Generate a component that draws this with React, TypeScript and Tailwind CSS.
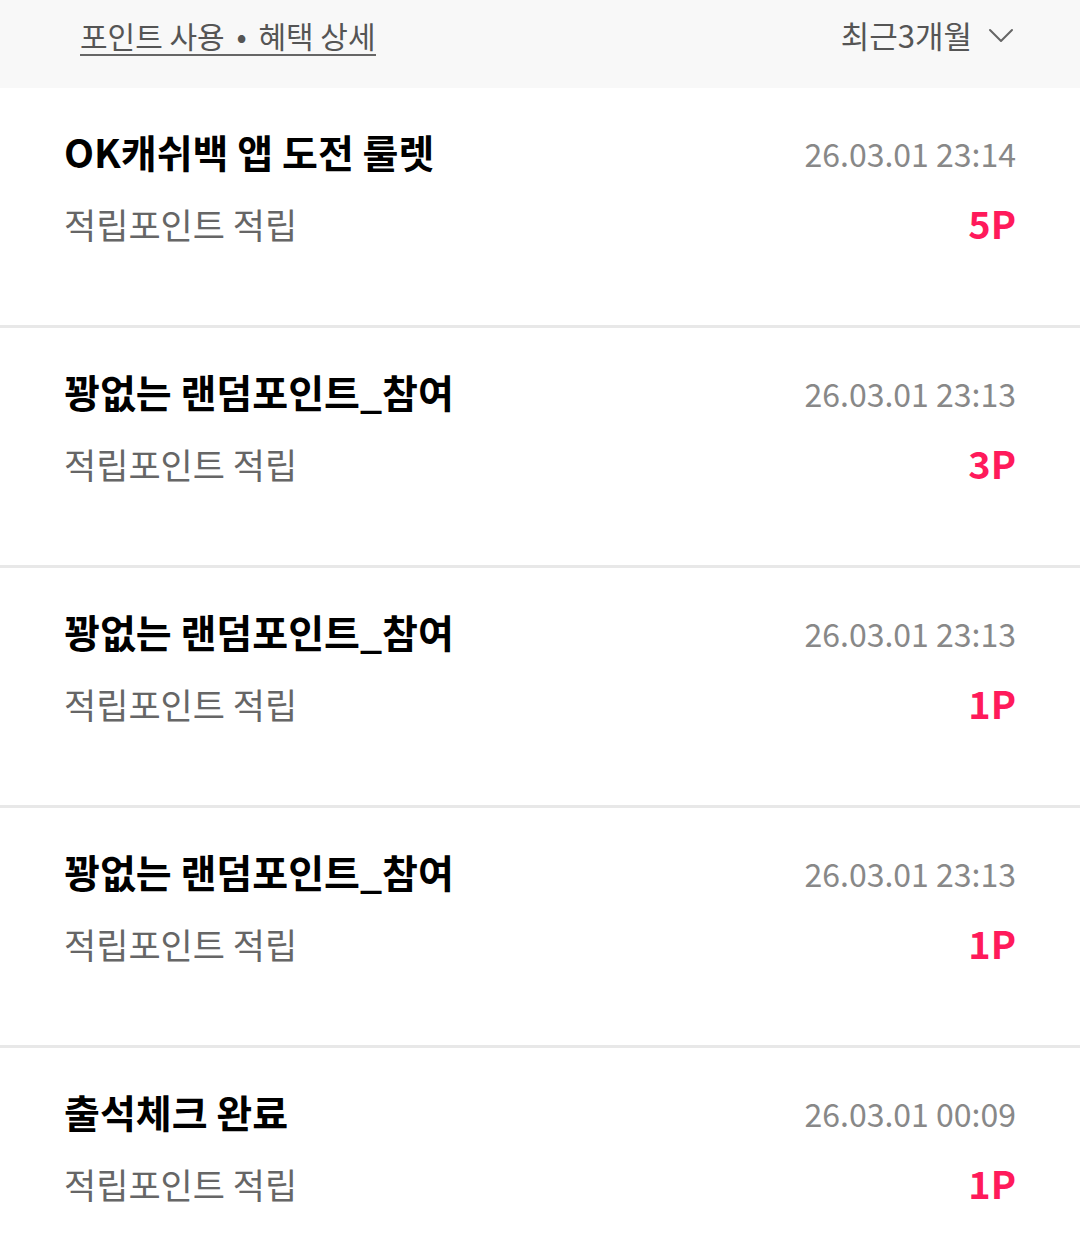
import React from 'react';

interface PointItem {
    title: string;
    desc: string;
    date: string;
    point: string;
}

const items: PointItem[] = [
    { title: 'OK캐쉬백 앱 도전 룰렛', desc: '적립포인트 적립', date: '26.03.01 23:14', point: '5P' },
    { title: '꽝없는 랜덤포인트_참여', desc: '적립포인트 적립', date: '26.03.01 23:13', point: '3P' },
    { title: '꽝없는 랜덤포인트_참여', desc: '적립포인트 적립', date: '26.03.01 23:13', point: '1P' },
    { title: '꽝없는 랜덤포인트_참여', desc: '적립포인트 적립', date: '26.03.01 23:13', point: '1P' },
    { title: '출석체크 완료', desc: '적립포인트 적립', date: '26.03.01 00:09', point: '1P' },
];

const font = { fontFamily: '"Noto Sans CJK KR", "Noto Sans", sans-serif' };

export default function App() {
    return (
        <div className="w-[1080px] h-[1253px] bg-white overflow-hidden" style={font}>
            <div className="h-[88px] bg-[#f8f8f8] flex justify-between items-start pl-[80px] pr-[66px] pt-[16px]">
                <span className="inline-block text-[30px] leading-[38px] text-[#555] border-b-2 border-[#666] whitespace-nowrap">
                    포인트 사용 <span className="mx-[5px]">•</span> 혜택 상세
                </span>
                <div className="flex items-start gap-[16px] text-[#555]">
                    <span className="text-[31px] leading-[40px] -mt-[1px]">최근3개월</span>
                    <svg width="26" height="18" viewBox="0 0 26 18" className="mt-[11px]" fill="none">
                        <path d="M2 3 L13 14 L24 3" stroke="#666" strokeWidth="2" strokeLinecap="round" strokeLinejoin="round" />
                    </svg>
                </div>
            </div>

            {items.map((item, i) => (
                <div key={i} className="h-[240px] border-b-[3px] border-[#e8e8e8] flex justify-between px-[64px]">
                    <div className="flex flex-col pt-[39px]">
                        <div className="text-[39px] leading-[48px] font-bold text-black">{item.title}</div>
                        <div className="mt-[25px] text-[35px] leading-[48px] text-[#666]">{item.desc}</div>
                    </div>
                    <div className="flex flex-col items-end pt-[45px]">
                        <div className="text-[32px] leading-[40px] text-[#888]">{item.date}</div>
                        <div className="mt-[26px] text-[38px] leading-[48px] font-bold text-[#ff1a5b]">{item.point}</div>
                    </div>
                </div>
            ))}
        </div>
    );
}
